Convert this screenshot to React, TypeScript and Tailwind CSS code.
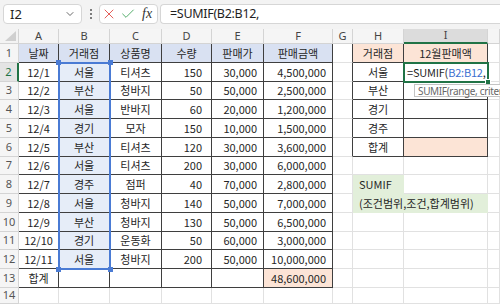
import React from 'react';
import { X, Check, ChevronDown } from 'lucide-react';

const COLS = ['A', 'B', 'C', 'D', 'E', 'F', 'G', 'H', 'I', ''];

const BODY = [
  ['12/1', '서울', '티셔츠', '150', '30,000', '4,500,000'],
  ['12/2', '부산', '청바지', '50', '50,000', '2,500,000'],
  ['12/3', '서울', '반바지', '60', '20,000', '1,200,000'],
  ['12/4', '경기', '모자', '150', '10,000', '1,500,000'],
  ['12/5', '부산', '티셔츠', '120', '30,000', '3,600,000'],
  ['12/6', '서울', '티셔츠', '200', '30,000', '6,000,000'],
  ['12/7', '경주', '점퍼', '40', '70,000', '2,800,000'],
  ['12/8', '서울', '청바지', '140', '50,000', '7,000,000'],
  ['12/9', '부산', '청바지', '130', '50,000', '6,500,000'],
  ['12/10', '경기', '운동화', '50', '60,000', '3,000,000'],
  ['12/11', '서울', '청바지', '200', '50,000', '10,000,000'],
];

const HEAD = ['날짜', '거래점', '상품명', '수량', '판매가', '판매금액'];
const SIDE = ['서울', '부산', '경기', '경주', '합계'];

type Fill = 'blue' | 'peach' | 'green' | 'range' | undefined;

interface CellDef {
  content?: React.ReactNode;
  align?: 'l' | 'c' | 'r' | 'rd';
  fill?: Fill;
  span?: boolean;
  skip?: boolean;
}

const fillClass: Record<string, string> = {
  blue: 'bg-[#d9e1f2]',
  peach: 'bg-[#fce4d6]',
  green: 'bg-[#e2efda]',
  range: 'bg-[#e6edf8]',
};

const alignClass = {
  l: 'justify-start pl-[6px]',
  c: 'justify-center',
  r: 'justify-end pr-[6px]',
  rd: 'justify-end pr-[9px]',
};

function inTable(r: number, c: number) {
  return (r >= 1 && r <= 13 && c >= 0 && c <= 5) || (r >= 1 && r <= 6 && (c === 7 || c === 8));
}

function getCell(r: number, c: number): CellDef {
  if (r === 1) {
    if (c <= 5) return { content: HEAD[c], align: 'c', fill: 'blue' };
    if (c === 7) return { content: '거래점', align: 'c', fill: 'peach' };
    if (c === 8) return { content: '12월판매액', align: 'c', fill: 'peach' };
  }
  if (r >= 2 && r <= 12 && c <= 5) {
    const v = BODY[r - 2][c];
    if (c === 1) return { content: v, align: 'c', fill: 'range' };
    if (c === 3) return { content: v, align: 'rd' };
    if (c >= 4) return { content: v, align: 'r' };
    return { content: v, align: 'c' };
  }
  if (r >= 2 && r <= 6 && c === 7) return { content: SIDE[r - 2], align: 'c' };
  if (r === 6 && c === 8) return { fill: 'peach' };
  if (r === 2 && c === 8) {
    return {
      align: 'l',
      content: (
        <span className="flex items-center -ml-[3px] text-[#1f1f1f] tracking-[-0.2px]">
          =SUMIF(<span className="text-[#3b6fd0]">B2:B12</span>,
          <span className="ml-[1px] w-px h-[13px] bg-black" />
        </span>
      ),
    };
  }
  if (r === 8 && c === 7) return { content: 'SUMIF', align: 'l', fill: 'green' };
  if (r === 9 && c === 7) return { content: '(조건범위,조건,합계범위)', align: 'l', fill: 'green', span: true };
  if (r === 9 && c === 8) return { skip: true };
  if (r === 13 && c === 0) return { content: '합계', align: 'c' };
  if (r === 13 && c === 5) return { content: '48,600,000', align: 'r', fill: 'peach' };
  return {};
}

function Cell({ r, c }: { r: number; c: number }) {
  const d = getCell(r, c);
  if (d.skip) return null;
  const rc = d.span ? c + 1 : c;
  const rightCls =
    inTable(r, rc) || inTable(r, rc + 1)
      ? 'border-r-[#3f3f3f]'
      : d.fill
      ? 'border-r-transparent'
      : 'border-r-[#e1e1e1]';
  const bottomCls =
    inTable(r, c) || inTable(r + 1, c)
      ? 'border-b-[#3f3f3f]'
      : d.fill
      ? 'border-b-transparent'
      : 'border-b-[#e1e1e1]';
  return (
    <div
      className={`flex items-center whitespace-nowrap overflow-visible border-r border-b ${rightCls} ${bottomCls} ${
        d.fill ? fillClass[d.fill] : 'bg-white'
      } ${d.align ? alignClass[d.align] : ''} ${d.span ? 'col-span-2' : ''}`}
    >
      {d.content}
    </div>
  );
}

function TopBar() {
  return (
    <div className="h-[29px] bg-[#f3f3f3] flex items-start pt-[4px] pl-[3px] font-['Noto_Sans',sans-serif]">
      <div className="w-[79px] h-[20px] bg-white border border-[#d6d6d6] rounded-[4px] flex items-center justify-between pl-[6px] pr-[5px]">
        <span className="text-[13px] text-[#222] leading-none">I2</span>
        <ChevronDown size={12} strokeWidth={1.6} className="text-[#444]" />
      </div>
      <div className="w-[17px] h-[20px] flex flex-col items-center justify-center gap-[2px]">
        <span className="w-[2px] h-[2px] bg-[#555] rounded-full" />
        <span className="w-[2px] h-[2px] bg-[#555] rounded-full" />
        <span className="w-[2px] h-[2px] bg-[#555] rounded-full" />
      </div>
      <div className="w-[59px] h-[20px] bg-white border border-[#d6d6d6] rounded-[4px] flex items-center pl-[1px]">
        <X size={16} strokeWidth={1.3} className="text-[#e0443e]" />
        <Check size={16} strokeWidth={1.3} className="ml-[3px] text-[#3aa155]" />
        <span className="ml-[6px] text-[14px] italic text-[#333] font-['Liberation_Serif',serif] leading-none">fx</span>
      </div>
      <div className="ml-[2px] flex-1 h-[20px] bg-white border border-r-0 border-[#d6d6d6] rounded-l-[4px] flex items-center pl-[9px]">
        <span className="text-[12.5px] tracking-[-0.3px] text-[#1f1f1f] leading-none">=SUMIF(B2:B12,</span>
      </div>
    </div>
  );
}

export default function App() {
  const rows = Array.from({ length: 14 }, (_, i) => i + 1);
  return (
    <div className="relative w-[500px] h-[304px] overflow-hidden bg-white">
      <TopBar />
      <div className="grid grid-cols-[19px_40px_51px_52px_50px_52px_69px_20px_51px_84px_1fr] grid-rows-[15px_19px_19px_18px_19px_19px_19px_18px_19px_19px_19px_18px_19px_19px_16px] text-[11px] text-[#262626] font-['Noto_Sans_CJK_KR','Noto_Sans',sans-serif]">
        <div className="relative bg-[#f3f3f3] border-r border-b border-[#d4d4d4]">
          <div className="absolute right-[2px] bottom-[2px] w-0 h-0 border-l-[11px] border-l-transparent border-b-[10px] border-b-[#cfcfcf]" />
        </div>
        {COLS.map((col, i) => (
          <div
            key={i}
            className={`flex items-center justify-center text-[11px] text-[#444] border-r border-[#d4d4d4] font-['Noto_Sans',sans-serif] ${
              col === 'I' ? 'bg-[#dcdcdc] border-b-2 border-b-[#217346]' : 'bg-[#f5f5f5] border-b'
            }`}
          >
            {col}
          </div>
        ))}
        {rows.map((r) => (
          <React.Fragment key={r}>
            <div
              className={`flex items-center justify-center text-[11px] border-b border-[#d4d4d4] font-['Noto_Sans',sans-serif] ${
                r === 2
                  ? 'bg-[#e4e4e4] text-[#217346] border-r-2 border-r-[#217346]'
                  : 'bg-[#f5f5f5] text-[#555] border-r'
              }`}
            >
              {r}
            </div>
            {COLS.map((_, c) => (
              <Cell key={c} r={r} c={c} />
            ))}
          </React.Fragment>
        ))}
      </div>

      {/* reference range B2:B12 */}
      <div className="absolute left-[58px] top-[62px] w-[53px] h-[208px] border-2 border-[#4a7bd4] pointer-events-none" />
      <div className="absolute left-[56px] top-[60px] w-[5px] h-[5px] bg-[#4a7bd4]" />
      <div className="absolute left-[108px] top-[60px] w-[5px] h-[5px] bg-[#4a7bd4]" />
      <div className="absolute left-[56px] top-[267px] w-[5px] h-[5px] bg-[#4a7bd4]" />
      <div className="absolute left-[108px] top-[267px] w-[5px] h-[5px] bg-[#4a7bd4]" />

      {/* active cell I2 */}
      <div className="absolute left-[403px] top-[62px] w-[86px] h-[21px] border-2 border-[#217346] pointer-events-none" />
      <div className="absolute left-[485px] top-[79px] w-[6px] h-[6px] bg-[#217346] border border-white" />

      {/* function tooltip */}
      <div className="absolute left-[414px] top-[84px] w-[86px] h-[13px] bg-white border border-r-0 border-[#c4c4c4] flex items-center pl-[3px] text-[10px] tracking-[-0.35px] text-[#666] whitespace-nowrap font-['Noto_Sans',sans-serif] leading-none">
        SUMIF(range, criter
      </div>
    </div>
  );
}
